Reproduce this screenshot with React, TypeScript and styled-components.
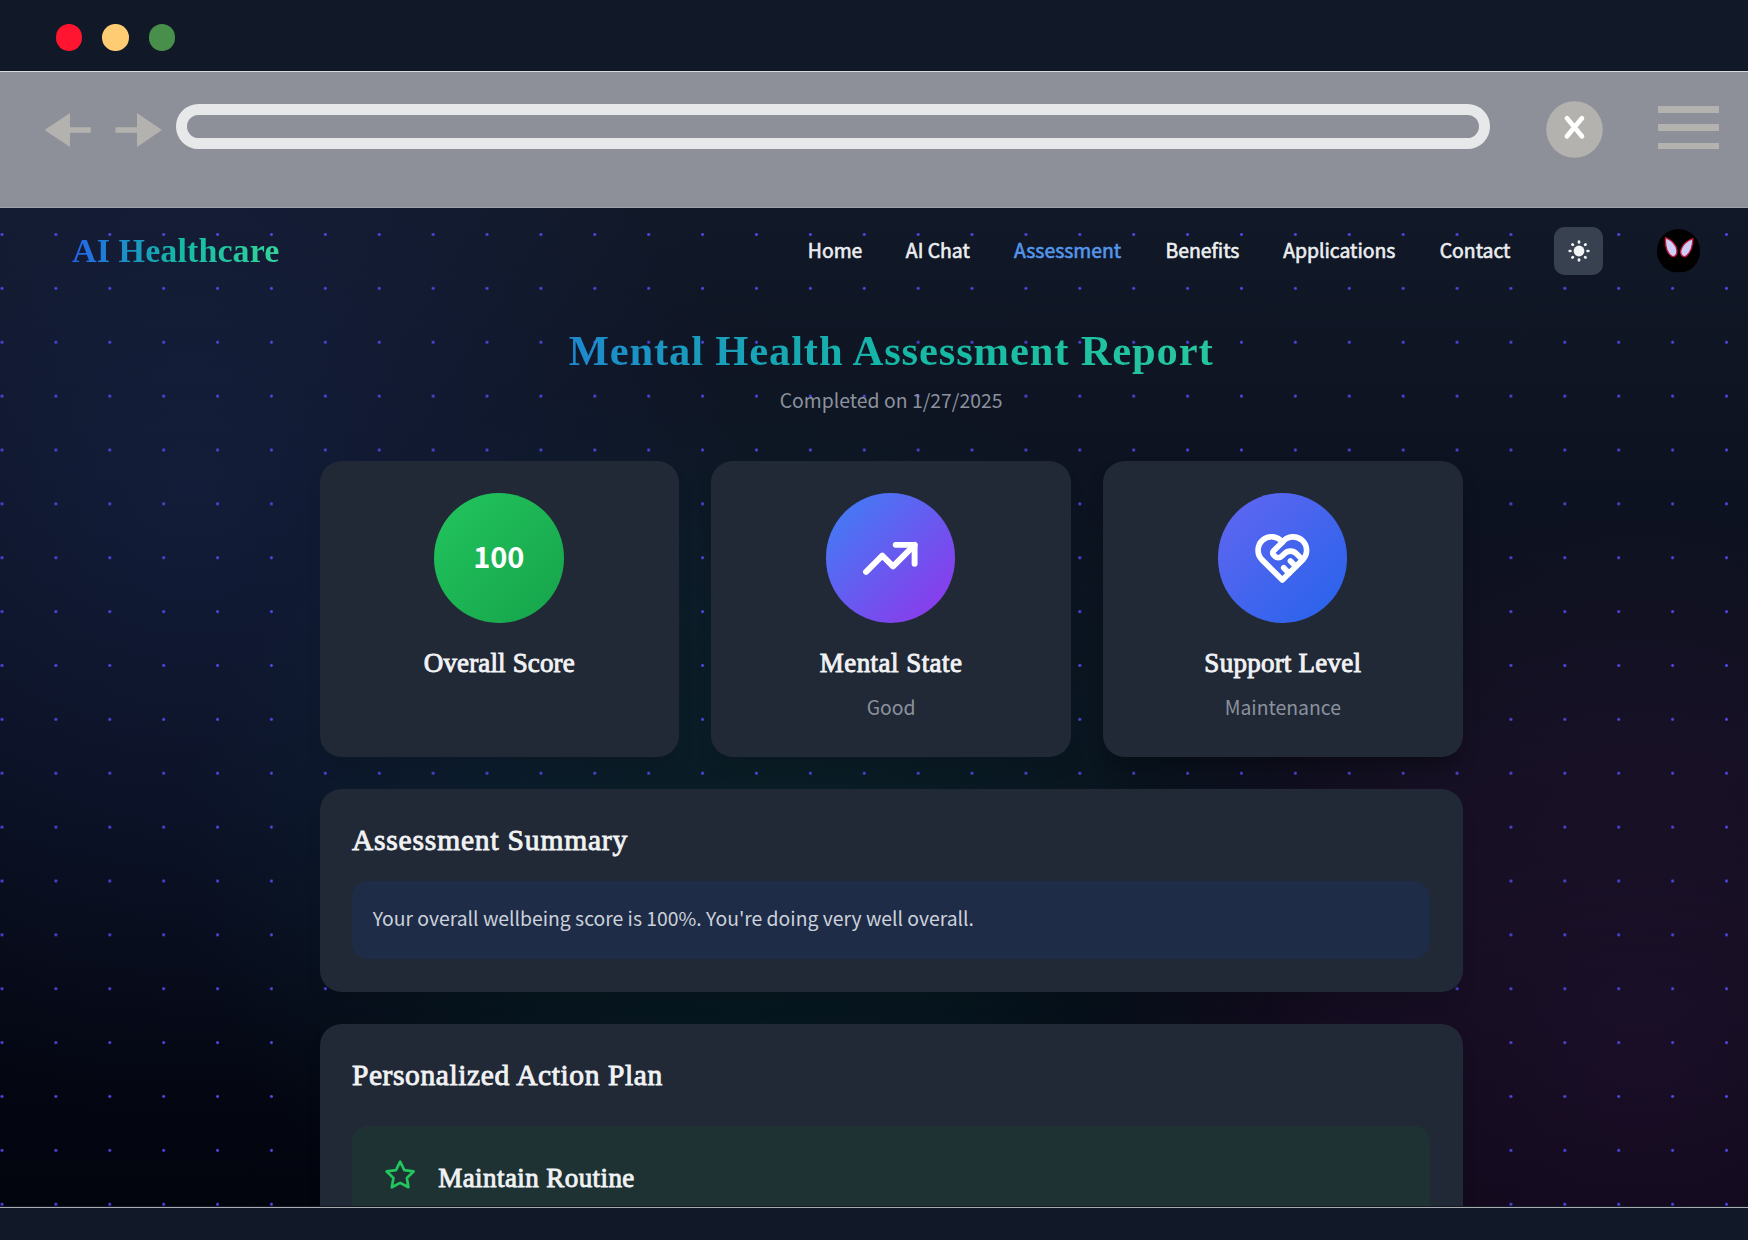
import React from "react";
import styled, { createGlobalStyle } from "styled-components";
import { TbTrendingUp, TbHeartHandshake, TbStar } from "react-icons/tb";

const sans = `"Noto Sans CJK SC", "Noto Sans", sans-serif`;
const serif = `"Liberation Serif", serif`;
const brandGradient = "linear-gradient(to right, #2563eb, #14b8a6 50%, #34d399)";

const GlobalStyle = createGlobalStyle`
  *, *::before, *::after { box-sizing: border-box; }
  body { margin: 0; background: #111827; font-family: ${sans}; }
  h1, h2, h3, p { margin: 0; }
`;

const Window = styled.div`
  display: flex;
  flex-direction: column;
  width: 1748px;
  height: 1240px;
  overflow: hidden;
  background: #111827;
`;

const TitleBar = styled.div`
  display: flex;
  align-items: center;
  gap: 20px;
  height: 72px;
  padding: 4px 0 0 55.7px;
  border-bottom: 1px solid #d8dade;
  flex: none;
`;

const Light = styled.span<{ $color: string }>`
  width: 26.5px;
  height: 26.5px;
  border-radius: 50%;
  background: ${(p) => p.$color};
`;

const Toolbar = styled.div`
  display: flex;
  align-items: flex-start;
  height: 136px;
  flex: none;
  padding-left: 44px;
  background: #8d9098;
  border-bottom: 1px solid #a0a3a8;
`;

const Arrows = styled.svg`
  width: 120px;
  height: 36px;
  margin-top: 40px;
  fill: #b4b2af;
`;

const AddressField = styled.div`
  width: 1314.5px;
  height: 45px;
  margin: 32px 0 0 11.5px;
  border: 11.3px solid #e7e8ea;
  border-radius: 23px;
`;

const CloseIcon = styled.svg`
  width: 57px;
  height: 57px;
  margin: 29.4px 0 0 56.4px;
`;

const MenuIcon = styled.div`
  display: flex;
  flex-direction: column;
  justify-content: space-between;
  width: 61px;
  height: 43px;
  margin: 34px 0 0 55px;
`;

const MenuLine = styled.span`
  height: 6.5px;
  background: #b4b2af;
`;

const Page = styled.main`
  height: 998px;
  flex: none;
  overflow: hidden;
  background:
    radial-gradient(circle at 1.5px 1.5px, #4f46e5 1px, rgba(79, 70, 229, 0.4) 1.5px, transparent 1.9px) 0.5px 25px / 53.9px 53.88px,
    radial-gradient(ellipse 560px 620px at 190px 290px, rgba(34, 56, 120, 0.28), rgba(30, 48, 110, 0.18) 50%, transparent),
    radial-gradient(ellipse 560px 480px at 740px 640px, rgba(12, 76, 74, 0.27), rgba(12, 72, 72, 0.2) 50%, transparent),
    radial-gradient(ellipse 560px 560px at 1640px 850px, rgba(110, 44, 120, 0.2), rgba(100, 36, 100, 0.16) 55%, transparent),
    linear-gradient(to bottom, #111827, #02040e);
`;

const Nav = styled.nav`
  display: flex;
  align-items: center;
  height: 86px;
  padding: 0 48px 0 72px;
`;

const Brand = styled.span`
  margin-right: auto;
  font: 700 34px/44px ${serif};
  letter-spacing: 0.1px;
  color: transparent;
  background: ${brandGradient};
  background-clip: text;
`;

const NavLinks = styled.div`
  display: flex;
  gap: 43.1px;
  margin: 0 42.2px 3px 0;
`;

const NavLink = styled.a<{ $active?: boolean; $width: number }>`
  width: ${(p) => p.$width}px;
  white-space: nowrap;
  font-size: 19.4px;
  line-height: 32px;
  color: ${(p) => (p.$active ? "#5596ea" : "#eceef1")};
  -webkit-text-stroke: 0.6px currentColor;
`;

const ThemeButton = styled.button`
  display: grid;
  place-items: center;
  width: 48.5px;
  height: 48.5px;
  padding: 0;
  margin-right: 53.9px;
  border: 0;
  border-radius: 10.8px;
  background: #38414f;
  color: #f3f4f6;
`;

const SunIcon = styled.svg`
  width: 22px;
  height: 22px;
  fill: currentColor;
  stroke: currentColor;
  stroke-width: 2.7;
  stroke-linecap: round;
`;

const Avatar = styled.svg`
  width: 43.2px;
  height: 43.2px;
  border-radius: 50%;
`;

const Report = styled.section`
  display: flex;
  flex-direction: column;
  gap: 32.3px;
  width: 1143px;
  margin-left: 319.6px;
`;

const ReportHeader = styled.header`
  display: flex;
  flex-direction: column;
  align-items: center;
  gap: 9px;
  height: 134.7px;
  padding-top: 33px;
`;

const Title = styled.h1`
  width: 100%;
  text-align: center;
  white-space: nowrap;
  font: 700 42.6px/48px ${serif};
  letter-spacing: 0.84px;
  color: transparent;
  background: ${brandGradient};
  background-clip: text;
`;

const Muted = styled.p`
  font-size: 19.4px;
  line-height: 32px;
  color: #8b929e;
`;

const Stats = styled.div`
  display: grid;
  grid-template-columns: repeat(3, 1fr);
  gap: 32.3px;
`;

const Card = styled.article<{ $raised?: boolean }>`
  padding: 32.3px;
  border-radius: 21.5px;
  background: #212937;
  box-shadow: 0 13px 20px -4px rgba(0, 0, 0, ${(p) => (p.$raised ? 0.3 : 0.1)});
`;

const StatCard = styled(Card)`
  display: flex;
  flex-direction: column;
  align-items: center;
  height: 296px;
`;

const Medallion = styled.div<{ $from: string; $to: string }>`
  display: grid;
  place-items: center;
  width: 129.4px;
  height: 129.4px;
  margin: 0 1px 22.5px 0;
  border-radius: 50%;
  background: linear-gradient(to bottom right, ${(p) => p.$from}, ${(p) => p.$to});
  color: #fff;
`;

const Score = styled.span`
  margin-bottom: 6px;
  font: 700 29px/40px ${sans};
`;

const Heading = styled.h2<{ $size: number; $spacing?: number }>`
  font: 400 ${(p) => p.$size}px/36px ${serif};
  letter-spacing: ${(p) => p.$spacing ?? 0}px;
  -webkit-text-stroke: 0.9px currentColor;
  white-space: nowrap;
  color: #f1f2f4;
`;

const StatValue = styled(Muted)`
  margin-top: 9.5px;
`;

const SummaryCard = styled(Card)`
  height: 202.4px;
  padding-top: 32.3px;
`;

const SummaryNote = styled.div`
  height: 78.4px;
  margin-top: 23.2px;
  padding: 21.5px 20.8px;
  border-radius: 16.2px;
  background: #1f2c48;
`;

const NoteText = styled.p`
  font-size: 19.35px;
  line-height: 32px;
  color: #ccd2da;
`;

const PlanCard = styled(Card)`
  height: 420px;
  padding-top: 33.3px;
`;

const PlanItem = styled.div`
  display: flex;
  gap: 21.5px;
  height: 300px;
  margin-top: 33px;
  padding: 32.3px 32.6px;
  border-radius: 16.2px;
  background: #1e3234;
`;

const StarIcon = styled(TbStar)`
  color: #22c55e;
  flex: none;
`;

const PlanHeading = styled(Heading)`
  margin-top: 1.6px;
`;

const Footer = styled.div`
  flex: 1;
  border-top: 1px solid #a9abaf;
  margin-top: 1px;
`;

const links = [
  { label: "Home", width: 55 },
  { label: "AI Chat", width: 65 },
  { label: "Assessment", width: 108.5 },
  { label: "Benefits", width: 74.5 },
  { label: "Applications", width: 113.5 },
  { label: "Contact", width: 72.5 },
];

export default function App() {
  return (
    <Window>
      <GlobalStyle />
      <TitleBar>
        <Light $color="#ff152f" />
        <Light $color="#ffcc73" />
        <Light $color="#478f4b" />
      </TitleBar>
      <Toolbar>
        <Arrows viewBox="0 0 120 36">
          <path d="M0.5 18 26 1v14.200h20.800v5.600H26v14.200z" />
          <path d="M118 18 93 1v14.200H71.500v5.600H93v14.200z" />
        </Arrows>
        <AddressField />
        <CloseIcon viewBox="0 0 57 57">
          <circle cx="28.5" cy="28.5" r="28.3" fill="#b4b2af" />
          <path d="m21 17.3 14.9 18M35.9 17.3 21 35.3" stroke="#fff" strokeWidth="4.8" strokeLinecap="round" />
        </CloseIcon>
        <MenuIcon>
          <MenuLine />
          <MenuLine />
          <MenuLine />
        </MenuIcon>
      </Toolbar>
      <Page>
        <Nav>
          <Brand>AI Healthcare</Brand>
          <NavLinks>
            {links.map((l) => (
              <NavLink key={l.label} $width={l.width} $active={l.label === "Assessment"}>
                {l.label}
              </NavLink>
            ))}
          </NavLinks>
          <ThemeButton aria-label="Toggle theme">
            <SunIcon viewBox="-11 -11 22 22">
              <circle r="5.4" stroke="none" />
              {[0, 45, 90, 135, 180, 225, 270, 315].map((angle) => (
                <path key={angle} d="M0 -9.3V-8.600" transform={`rotate(${angle})`} />
              ))}
            </SunIcon>
          </ThemeButton>
          <Avatar viewBox="0 0 43 43">
            <rect width="43" height="43" fill="#000" />
            <g fill="#cdcdf8" stroke="#c8143c" strokeWidth="1.3" strokeLinejoin="round">
              <path d="M8.5 8.5c6 2.500 10.500 7 11.300 12.500.6 5.500-3 8-6 5.500C9.500 22.500 8 15 8.500 8.500z" />
              <path d="M35.800 9.500c-6 2-10.500 6.500-12 11.500-1.200 5.500 2.700 8 5.900 5.500 4-3.500 5.900-10.500 6.100-17z" />
            </g>
          </Avatar>
        </Nav>
        <Report>
          <ReportHeader>
            <Title>Mental Health Assessment Report</Title>
            <Muted>Completed on 1/27/2025</Muted>
          </ReportHeader>
          <Stats>
            <StatCard>
              <Medallion $from="#22c55e" $to="#16a34a">
                <Score>100</Score>
              </Medallion>
              <Heading $size={27} $spacing={0.15}>Overall Score</Heading>
            </StatCard>
            <StatCard>
              <Medallion $from="#3b82f6" $to="#9333ea">
                <TbTrendingUp size={64.7} strokeWidth={2.2} />
              </Medallion>
              <Heading $size={27} $spacing={0.45}>Mental State</Heading>
              <StatValue>Good</StatValue>
            </StatCard>
            <StatCard $raised>
              <Medallion $from="#6366f1" $to="#2563eb">
                <TbHeartHandshake size={64.7} strokeWidth={2.1} />
              </Medallion>
              <Heading $size={27} $spacing={0.25}>Support Level</Heading>
              <StatValue>Maintenance</StatValue>
            </StatCard>
          </Stats>
          <SummaryCard>
            <Heading $size={29.5} $spacing={0.82}>Assessment Summary</Heading>
            <SummaryNote>
              <NoteText>Your overall wellbeing score is 100%. You're doing very well overall.</NoteText>
            </SummaryNote>
          </SummaryCard>
          <PlanCard>
            <Heading $size={29.5} $spacing={0.6}>Personalized Action Plan</Heading>
            <PlanItem>
              <StarIcon size={32.3} />
              <PlanHeading as="h3" $size={27} $spacing={0.42}>Maintain Routine</PlanHeading>
            </PlanItem>
          </PlanCard>
        </Report>
      </Page>
      <Footer />
    </Window>
  );
}
